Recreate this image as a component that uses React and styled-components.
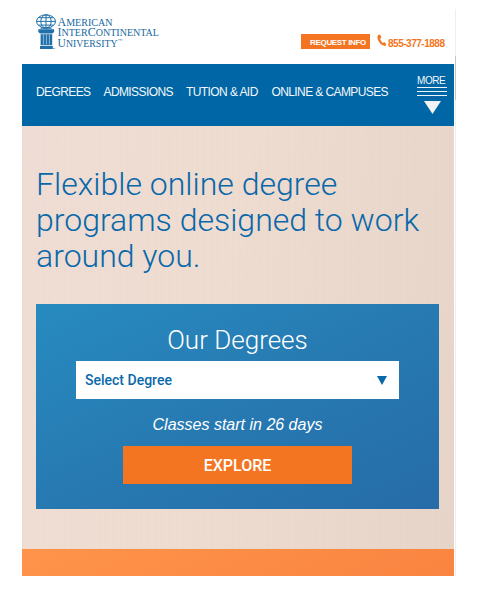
import React from "react";
import styled, { createGlobalStyle } from "styled-components";

const GlobalStyle = createGlobalStyle`
  * { box-sizing: border-box; }
  body { margin: 0; background: #fff; }
`;

const Viewport = styled.div`
  display: flex;
  width: 480px;
  height: 590px;
  padding-left: 22px;
  overflow: hidden;
  font-family: "Liberation Sans", Arial, sans-serif;
`;

const Page = styled.div`
  display: flex;
  flex-direction: column;
  flex: none;
  width: 432px;
  height: 576px;
`;

const ScrollTrack = styled.div`
  width: 1px;
  height: 567px;
  margin: 9px 0 0 1px;
  padding-top: 47px;
  background: #eeeeee;
`;

const ScrollThumb = styled.div`
  height: 44px;
  background: #c4c4c4;
`;

const Header = styled.header`
  display: flex;
  flex: none;
  height: 64px;
`;

const Logo = styled.svg`
  display: block;
  flex: none;
  width: 279px;
  height: 64px;
`;

const RequestButton = styled.button`
  flex: none;
  width: 69px;
  height: 15px;
  margin-top: 34px;
  padding: 2px 0 0 5px;
  border: 0;
  background: #f47521;
  color: #fff;
  font: bold 8px/13px "Liberation Sans", Arial, sans-serif;
  letter-spacing: -0.35px;
  white-space: nowrap;
`;

const Phone = styled.a`
  display: flex;
  margin: 34px 0 0 7px;
  color: #f47521;
  font-size: 10px;
  font-weight: bold;
  line-height: 19px;
  letter-spacing: -0.48px;
  white-space: nowrap;
`;

const PhoneIcon = styled.svg`
  width: 10px;
  height: 13px;
  margin-right: 1px;
`;

const Nav = styled.nav`
  display: flex;
  flex: none;
  height: 62px;
  padding-left: 14px;
  background: #0066a5;
  color: #f4f8fb;
`;

const NavItem = styled.a`
  flex: none;
  width: ${(p) => p.$width}px;
  padding-top: 20px;
  font-size: 12px;
  line-height: 16px;
  letter-spacing: ${(p) => p.$tracking}px;
  white-space: nowrap;
`;

const More = styled.div`
  width: 30px;
  padding-top: 10px;
  font-size: 10px;
  line-height: 13px;
  letter-spacing: -0.45px;
`;

const MoreIcon = styled.svg`
  display: block;
  width: 30px;
  height: 28px;
`;

const Hero = styled.main`
  flex: none;
  height: 423px;
  padding: 40px 14px 0;
  background:
    repeating-linear-gradient(90deg, rgba(185, 140, 110, 0.02) 0 1px, transparent 1px 4px, rgba(255, 255, 255, 0.03) 4px 5px, transparent 5px 7px),
    linear-gradient(100deg, #efddd5 0%, #eedcd0 45%, #e7d4c8 100%);
`;

const Headline = styled.h1`
  height: 138px;
  margin: 0;
  color: #0968aa;
  font: 300 32px/36px Roboto, sans-serif;
  letter-spacing: 0;
  white-space: nowrap;
`;

const DegreePanel = styled.section`
  display: flex;
  flex-direction: column;
  align-items: center;
  width: 403px;
  height: 205px;
  background: linear-gradient(154deg, #278bc0 0%, #2779b1 52%, #266ca8 100%);
  color: #fff;
`;

const PanelTitle = styled.h2`
  height: 57px;
  margin: 0;
  padding-top: 20px;
  font: 300 26px/32px Roboto, sans-serif;
`;

const Select = styled.div`
  display: flex;
  align-items: center;
  justify-content: space-between;
  width: 323px;
  height: 38px;
  padding: 0 12px 0 9px;
  background: #fff;
  color: #0968aa;
  font: 500 14px/20px Roboto, sans-serif;
`;

const SelectArrow = styled.svg`
  width: 10px;
  height: 9px;
`;

const StartNote = styled.p`
  height: 47px;
  margin: 0;
  padding-top: 16px;
  font: italic 16px/20px "Liberation Sans", Arial, sans-serif;
  white-space: nowrap;
`;

const ExploreButton = styled.button`
  width: 229px;
  height: 38px;
  padding: 1px 0 0;
  border: 0;
  background: #f47521;
  color: #fff;
  font: 500 16px/38px Roboto, sans-serif;
`;

const FooterBand = styled.footer`
  height: 27px;
  background: linear-gradient(155deg, #ff944a, #f98441);
`;

const navItems = [
  { label: "DEGREES", width: 67.5, tracking: -0.6 },
  { label: "ADMISSIONS", width: 82.5, tracking: -0.6 },
  { label: "TUTION & AID", width: 85.5, tracking: -0.58 },
  { label: "ONLINE & CAMPUSES", width: 145.5, tracking: -0.6 },
];

const LogoLine = ({ x, y, width, children }) => (
  <text x={x} y={y} textLength={width} lengthAdjust="spacingAndGlyphs" fontSize="10.6">
    {children}
  </text>
);

const Cap = ({ children }) => <tspan fontSize="12.6">{children}</tspan>;

export default function App() {
  return (
    <>
      <GlobalStyle />
      <Viewport>
        <Page>
          <Header>
            <Logo viewBox="22 0 279 64" role="img" aria-label="American InterContinental University">
              <g fill="none" stroke="#1f70a9" strokeWidth="1">
                <ellipse cx="46" cy="21.4" rx="9.5" ry="6.6" />
                <ellipse cx="46" cy="21.4" rx="5.2" ry="6.6" />
                <path d="M46 15v13M36.5 21.4h19M38.5 17.7h15M38.5 25.1h15" />
              </g>
              <path d="M40.5 27.6h11v1.2h-11zM38.3 29.3h15.8v2.6l-1.8 1.7H40.1l-1.8-1.7z" fill="#1f70a9" />
              <path d="M40.6 34.3h11.6v11H40.6zM40 46h12.8v3H40z" fill="#1f70a9" />
              <path d="M43.4 34.5v10M46.4 34.5v10M49.4 34.5v10" stroke="#a9cce3" strokeWidth="0.8" />
              <circle cx="54" cy="48.4" r="0.6" fill="#1f70a9" />
              <g fill="#1768a0" fontFamily="Liberation Serif, Times New Roman, serif">
                <LogoLine x="57.5" y="26.2" width="55"><Cap>A</Cap>MERICAN</LogoLine>
                <LogoLine x="57.5" y="36.3" width="101.5"><Cap>I</Cap>NTER<Cap>C</Cap>ONTINENTAL</LogoLine>
                <LogoLine x="57.5" y="46.7" width="60"><Cap>U</Cap>NIVERSITY</LogoLine>
                <text x="118" y="42" fontSize="4.5">™</text>
              </g>
            </Logo>
            <RequestButton>REQUEST INFO</RequestButton>
            <Phone>
              <PhoneIcon viewBox="0 0 10 13">
                <path d="M1.2 1.1 3 .4l1.5 3-1.4 1c.4 1.8 1.4 3.5 2.8 4.6l1.5-.9 2 2.5-1.2 1.3C4.7 12.1.2 7.5.4 2.6z" fill="#f47521" />
              </PhoneIcon>
              855-377-1888
            </Phone>
          </Header>
          <Nav>
            {navItems.map((n) => (
              <NavItem key={n.label} $width={n.width} $tracking={n.tracking}>{n.label}</NavItem>
            ))}
            <More>
              MORE
              <MoreIcon viewBox="0 0 30 28">
                <path d="M0 .5h30M0 4.5h30M0 8.5h30" stroke="#edf5fa" />
                <path d="M7 14h17l-8.5 13z" fill="#f2f2f2" />
              </MoreIcon>
            </More>
          </Nav>
          <Hero>
            <Headline>
              Flexible online degree<br />programs designed to work<br />around you.
            </Headline>
            <DegreePanel>
              <PanelTitle>Our Degrees</PanelTitle>
              <Select>
                Select Degree
                <SelectArrow viewBox="0 0 10 9"><path d="M0 0h10L5 9z" fill="#0968aa" /></SelectArrow>
              </Select>
              <StartNote>Classes start in 26 days</StartNote>
              <ExploreButton>EXPLORE</ExploreButton>
            </DegreePanel>
          </Hero>
          <FooterBand />
        </Page>
        <ScrollTrack><ScrollThumb /></ScrollTrack>
      </Viewport>
    </>
  );
}
